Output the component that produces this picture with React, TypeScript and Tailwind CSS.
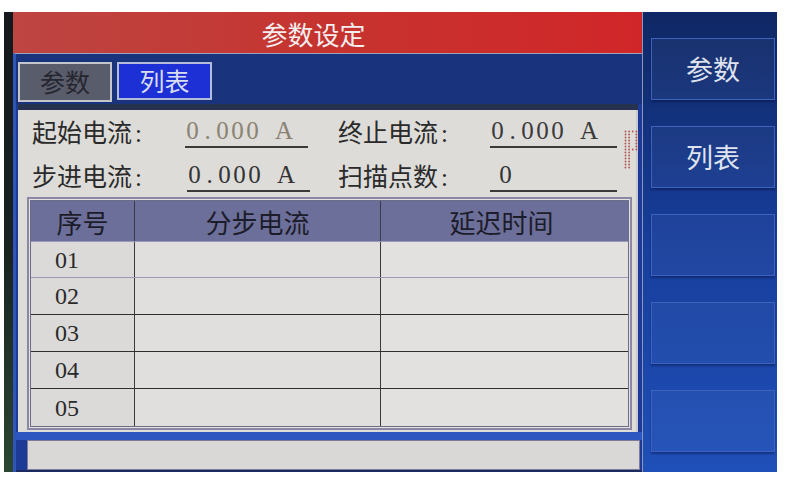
import React from 'react';

const cjk = '"Noto Sans CJK SC", "Noto Sans", sans-serif';
const serif = '"Liberation Serif", "DejaVu Serif", serif';

// fixed pitch digits, like the LCD font on the device
const Mono = ({ text, pitch = 'w-[15px]' }: { text: string; pitch?: string }) => (
  <span className="inline-flex">
    {text.split('').map((ch, i) => (
      <span key={i} className={`${pitch} inline-block text-center`}>
        {ch === ' ' ? '\u00a0' : ch}
      </span>
    ))}
  </span>
);

const Field = ({
  label,
  value,
  width,
  valueClass,
  labelWidth,
  valuePad = 'pl-0',
}: {
  label: string;
  value: string;
  width: string;
  valueClass: string;
  labelWidth: string;
  valuePad?: string;
}) => (
  <div className="flex items-center">
    <div className={`${labelWidth} text-[25px] text-[#2a2a2a] leading-none`} style={{ fontFamily: cjk }}>
      {label}
      <span className="ml-[3px]" style={{ fontFamily: serif }}>:</span>
    </div>
    <div
      className={`${width} ${valuePad} h-[32px] border-b-[2px] border-[#3a3a3a] flex items-end pb-[3px] text-[25px] leading-none ${valueClass}`}
      style={{ fontFamily: serif }}
    >
      <Mono text={value} />
    </div>
  </div>
);

const dots: { x: number; y: number }[] = [];
for (let r = 0; r < 13; r++) {
  const cols = r < 7 ? [0, 1, 2, 3] : [0, 1];
  cols.forEach((c) => {
    if (r > 0 && r < 6 && c === 2) return;
    dots.push({ x: 1.5 + c * 3.6, y: 1.5 + r * 3 });
  });
}

const rows = ['01', '02', '03', '04', '05'];

export default function App() {
  return (
    <div className="w-[791px] h-[482px] bg-white overflow-hidden">
      <div className="ml-[4px] mt-[12px] w-[773px] h-[460px] flex bg-[#101820]">
        {/* left bezel */}
        <div className="w-[9px] bg-gradient-to-b from-[#15181c] via-[#182220] to-[#2a4632]" />

        {/* main screen */}
        <div className="w-[629px] flex flex-col">
          <div
            className="h-[41px] bg-gradient-to-r from-[#bd4542] via-[#c6332f] to-[#d12629] flex items-center justify-center text-[26px] text-[#f4eeee] pr-[28px] pt-[2px]"
            style={{ fontFamily: cjk }}
          >
            参数设定
          </div>

          <div className="flex-1 flex flex-col bg-[#1c3a96] border-t border-[#9aa3c0] border-l-[3px] border-l-[#2f55b8]">
            {/* tab row */}
            <div className="h-[50px] bg-[#19347c] flex items-start gap-[5px] pl-[2px] pt-[8px] pr-[4px]">
              <div
                className="w-[94px] h-[40px] bg-[#595c6a] border-[2px] border-[#c4c6cc] flex items-center justify-center text-[25px] text-[#262630]"
                style={{ fontFamily: cjk }}
              >
                参数
              </div>
              <div
                className="w-[95px] h-[38px] bg-[#1c30d6] border-[2px] border-[#b4bcd8] flex items-center justify-center text-[25px] text-[#d8ddf2]"
                style={{ fontFamily: cjk }}
              >
                列表
              </div>
            </div>
            <div className="h-[6px] ml-[2px] mr-[4px] bg-[#263250]" />

            {/* content */}
            <div className="relative h-[322px] ml-[2px] mr-[4px] bg-[#dddcd9] border-r-[2px] border-[#c8c8d0]">
              <div className="pl-[14px] flex flex-col">
                <div className="h-[44px] flex items-center gap-[30px]">
                  <Field label="起始电流" value="0.000 A" width="w-[123px]" labelWidth="w-[153px]" valueClass="text-[#8a8272]" />
                  <Field label="终止电流" value="0.000 A" width="w-[127px]" labelWidth="w-[152px]" valueClass="text-[#3a3a3a]" />
                </div>
                <div className="h-[44px] flex items-center gap-[28px]">
                  <Field label="步进电流" value="0.000 A" width="w-[123px]" labelWidth="w-[155px]" valueClass="text-[#333]" />
                  <Field label="扫描点数" value="0" width="w-[127px]" labelWidth="w-[152px]" valueClass="text-[#333]" valuePad="pl-[8px]" />
                </div>
              </div>

              <svg className="absolute left-[606px] top-[20px]" width="14" height="40" viewBox="0 0 14 40">
                {dots.map((d, i) => (
                  <circle key={i} cx={d.x} cy={d.y} r="0.9" fill="#b4524e" />
                ))}
              </svg>

              {/* table */}
              <div className="ml-[9px] mt-[-1px] w-[605px] border-[2px] border-[#8a88a4] p-[1px] bg-[#e4e3e1]">
                <div className="border border-[#6c6c88]">
                  <div className="h-[40px] flex bg-[#6c6f99] text-[26px] text-[#1c1c2a]" style={{ fontFamily: cjk }}>
                    <div className="w-[104px] flex items-center justify-center border-r border-[#3a3a4a]">序号</div>
                    <div className="w-[246px] flex items-center justify-center border-r border-[#3a3a4a]">分步电流</div>
                    <div className="flex-1 flex items-center justify-center pr-[6px]">延迟时间</div>
                  </div>
                  {rows.map((r, i) => (
                    <div
                      key={r}
                      className={`h-[37px] flex ${i < rows.length - 1 ? 'border-b border-[#2e2e2e]' : ''} ${
                        i === 0 ? 'border-t border-[#9a9ab8]' : ''
                      }`}
                    >
                      <div
                        className="w-[104px] flex items-center pl-[24px] text-[24px] text-[#2a2a2a] border-r border-[#3a3a3a] bg-[#dcdad8]"
                        style={{ fontFamily: serif }}
                      >
                        {r}
                      </div>
                      <div className="w-[246px] border-r border-[#3a3a3a] bg-[#e0dfdd]" />
                      <div className="flex-1 bg-[#e2e1df]" />
                    </div>
                  ))}
                </div>
              </div>
            </div>

            <div className="h-[8px] bg-[#2d56c0]" />
            <div className="h-[30px] ml-[11px] mr-[2px] bg-[#d9d8d6] border border-[#7d7c98]" />
            <div className="h-[2px] bg-[#1b2a60]" />
          </div>
        </div>

        {/* right soft keys */}
        <div className="flex-1 flex flex-col gap-[26px] pl-[8px] pt-[26px] pr-[2px] bg-gradient-to-b from-[#0f2764] via-[#173e9c] to-[#1f4fb8] border-l border-[#8d97b8]">
          {['参数', '列表', '', '', ''].map((t, i) => (
            <div
              key={i}
              className="h-[62px] border border-[#3d63bd] bg-[#ffffff0a] shadow-[0_2px_2px_rgba(0,0,40,0.35)] flex items-center justify-center text-[27px] text-[#dfe3f0]"
              style={{ fontFamily: cjk }}
            >
              {t}
            </div>
          ))}
        </div>
      </div>
    </div>
  );
}
